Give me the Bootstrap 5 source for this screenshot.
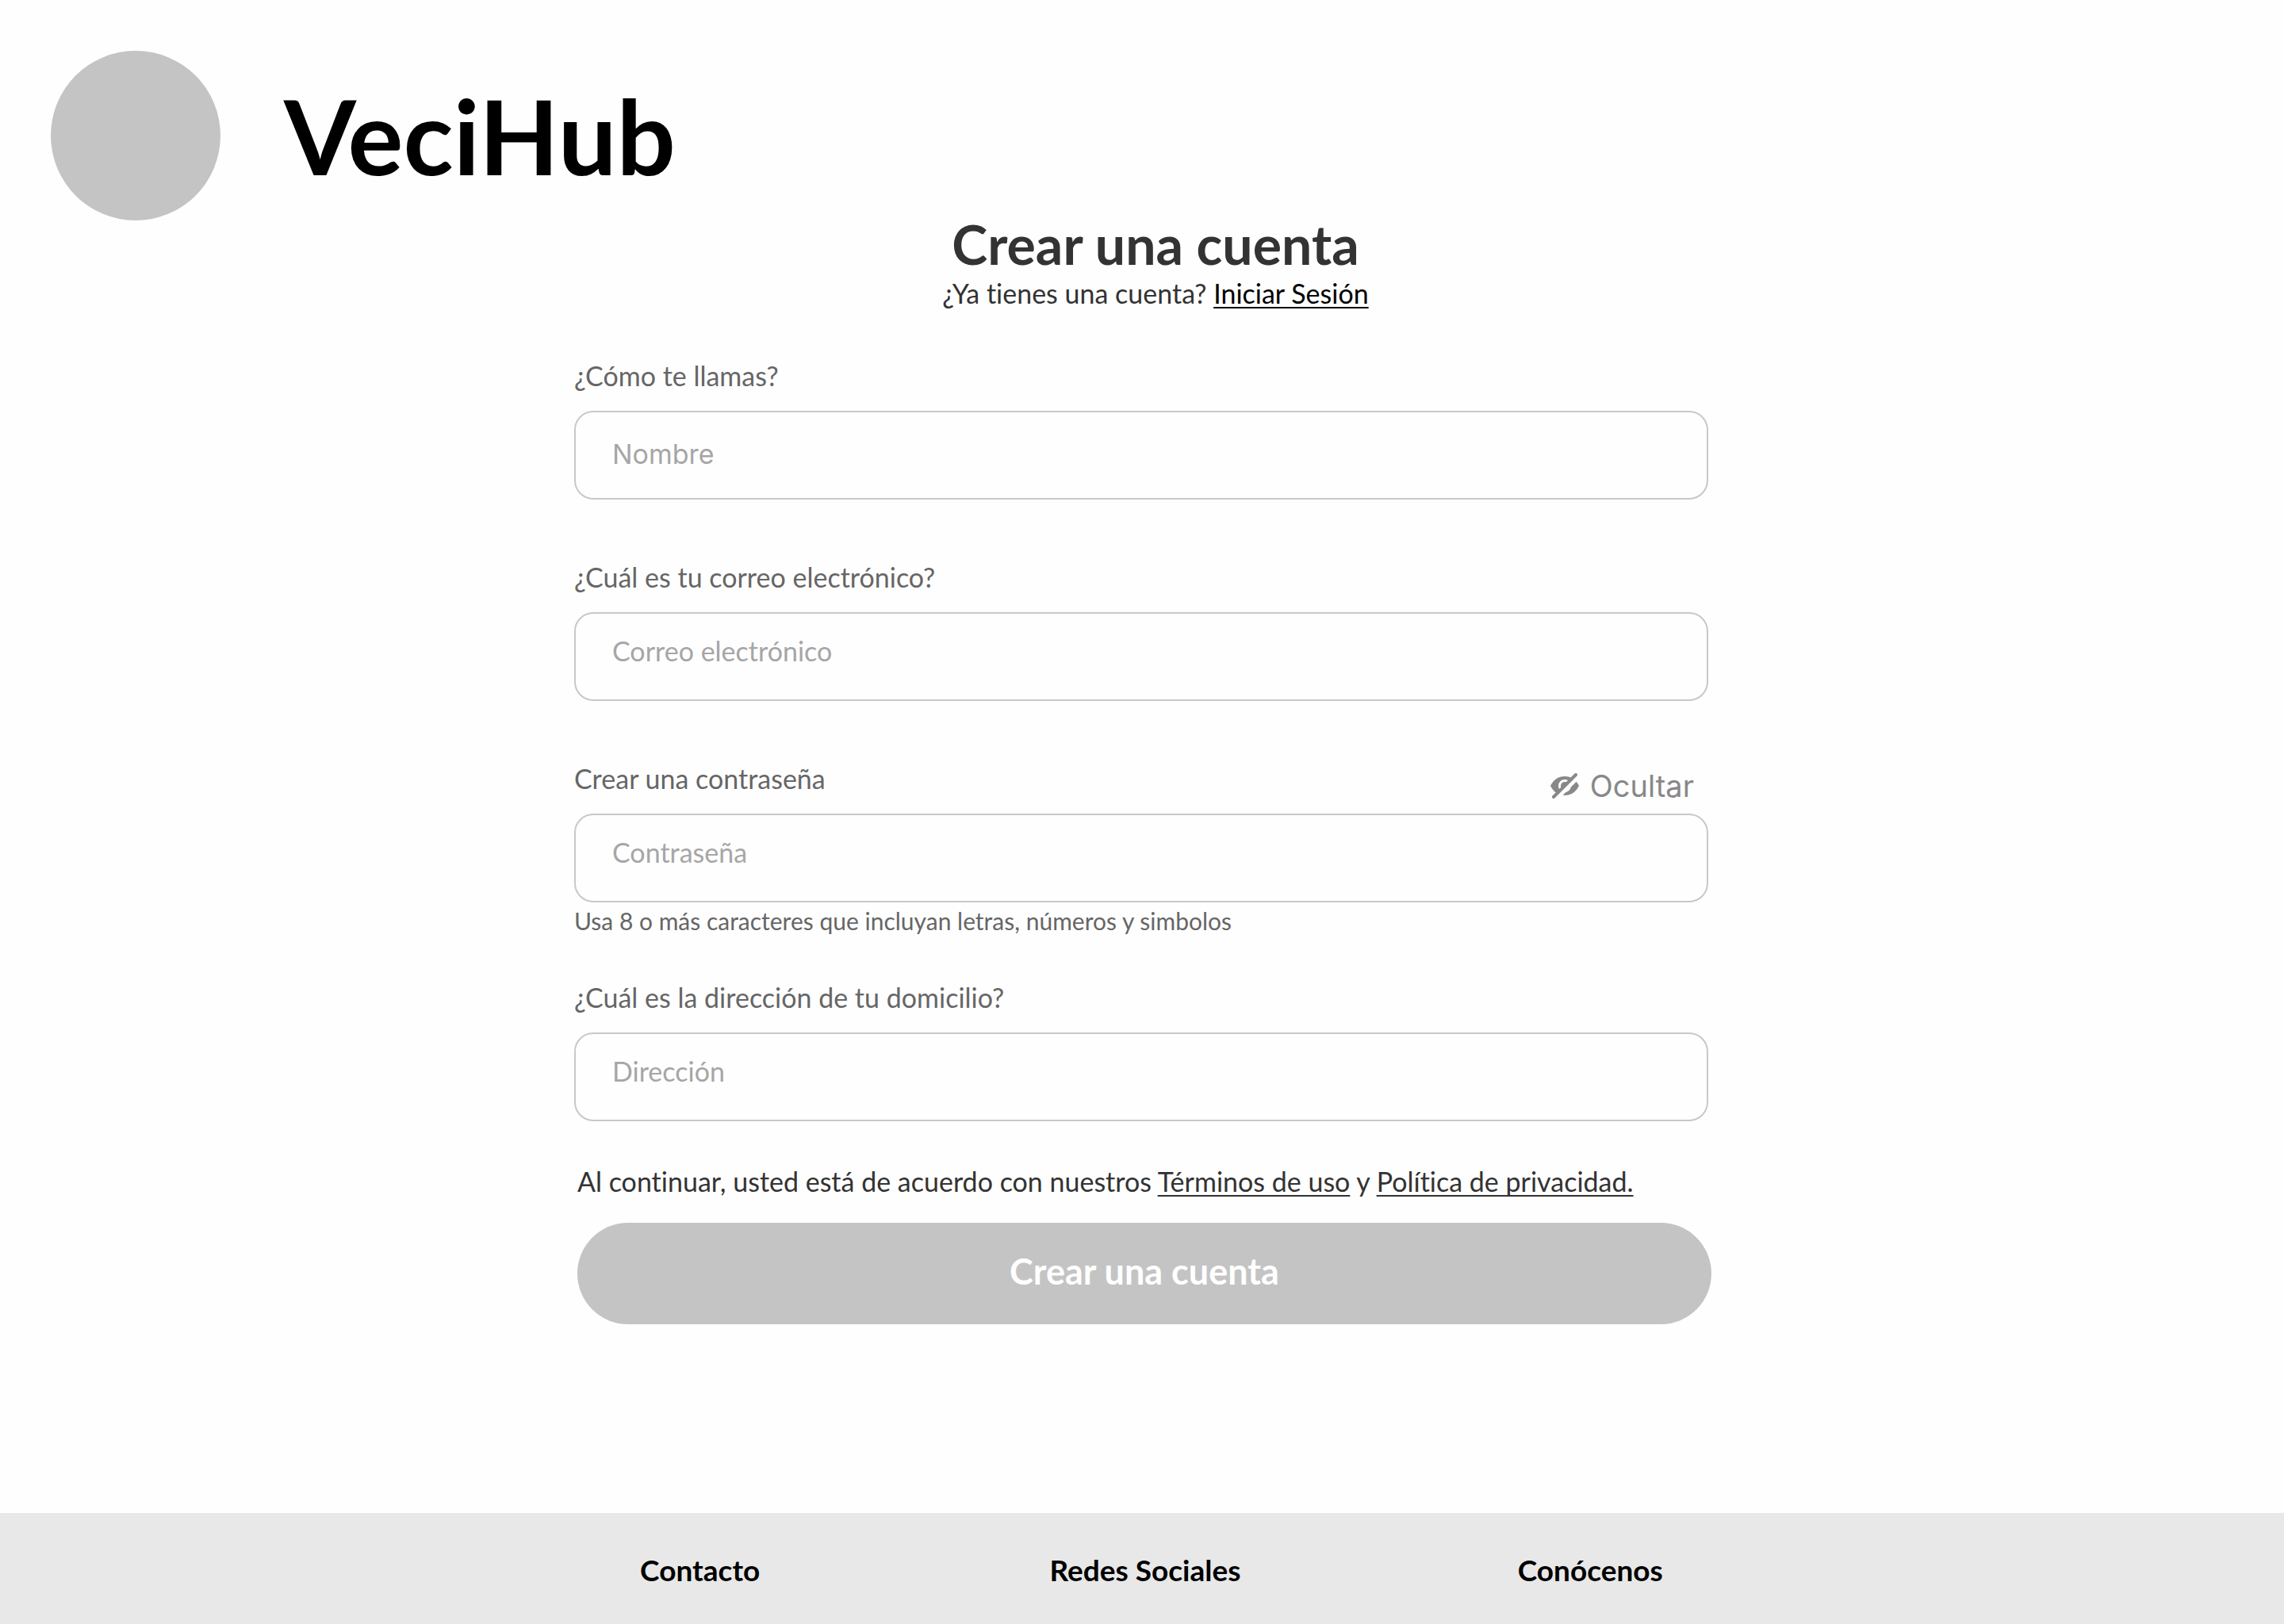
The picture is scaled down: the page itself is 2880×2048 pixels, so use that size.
<!DOCTYPE html>
<html lang="es">
<head>
<meta charset="utf-8">
<meta name="viewport" content="width=device-width, initial-scale=1">
<title>VeciHub - Crear una cuenta</title>
<link href="https://cdn.jsdelivr.net/npm/bootstrap@5.3.0/dist/css/bootstrap.min.css" rel="stylesheet">
<style>
  body { font-family: Lato, "Open Sans", sans-serif; font-size: 34px; line-height: 48px; font-variant-ligatures: none; color: #333; background: #fefefe; }
  .site-header { padding: 64px 64px 0; gap: 80px; }
  .logo-dot { width: 214px; height: 214px; background: #c4c4c4; }
  .site-name { font-size: 131px; line-height: 160px; font-weight: 700; color: #000; }
  .signup { width: 100%; max-width: 1432px; padding-right: 2px; }
  .signup-head { padding-left: 36px; margin-bottom: 56px; }
  .signup-title { font-size: 68px; line-height: 60px; font-weight: 700; color: #333; }
  .signup a { color: inherit; text-decoration-thickness: 2px; text-underline-offset: 4px; text-decoration-skip-ink: none; }
  .signup .login-link { color: #000; }
  .field { margin-bottom: 74px; }
  .field-hinted { margin-bottom: 54px; }
  .field-last { margin-bottom: 52px; }
  .field-label { color: #666; padding-bottom: 20px; }
  .field-input { height: 112px; padding: 0 46px 16px; border: 2px solid #c8c8c8; border-radius: 24px; font-size: 34px; background: #fefefe; }
  .field-input::placeholder { color: #a6a6a6; }
  .input-centered { padding-bottom: 4px; font-family: Inter, sans-serif; }
  .hint { font-size: 30px; line-height: 38px; color: #666; }
  .toggle-pass { font-family: Inter, sans-serif; font-size: 38px; line-height: 40px; color: #888; gap: 14px; margin: 0 18px 15px 0; }
  .toggle-pass svg { width: 36px; height: 32px; }
  .terms { margin-bottom: 28px; }
  .signup-end { margin: 0 -4px 0 4px; }
  .submit-btn, .submit-btn:hover { height: 128px; padding-bottom: 10px; font-size: 45px; font-weight: 700; color: #fff; background: #c4c4c4; }
  .site-footer { background: #e8e8e8; }
  .footer-links { max-width: 1692px; padding: 48px 0 44px 8px; font-size: 37px; font-weight: 700; }
  .footer-links a { color: #000; }
</style>
<script src="https://cdn.jsdelivr.net/npm/bootstrap@5.3.0/dist/js/bootstrap.bundle.min.js"></script>
</head>
<body class="d-flex flex-column min-vh-100">
<header class="site-header d-flex align-items-center">
  <div class="logo-dot rounded-circle"></div>
  <div class="site-name">VeciHub</div>
</header>

<main class="signup mx-auto">
  <div class="signup-head text-center">
    <h1 class="signup-title mb-2">Crear una cuenta</h1>
    <p class="mb-0">¿Ya tienes una cuenta? <a class="login-link" href="#login">Iniciar Sesión</a></p>
  </div>
  <form>
    <div class="field">
      <label class="field-label d-block" for="nombre">¿Cómo te llamas?</label>
      <input class="form-control field-input input-centered" id="nombre" type="text" placeholder="Nombre">
    </div>
    <div class="field">
      <label class="field-label d-block" for="correo">¿Cuál es tu correo electrónico?</label>
      <input class="form-control field-input" id="correo" type="email" placeholder="Correo electrónico">
    </div>
    <div class="field field-hinted">
      <div class="d-flex justify-content-between align-items-end">
        <label class="field-label" for="clave">Crear una contraseña</label>
        <button class="toggle-pass btn p-0 border-0 d-flex align-items-center" type="button">
          <svg viewBox="0 0 36 32" aria-hidden="true">
            <path fill="#888" d="M0 16C4 8 10 4 18 4s14 4 18 12c-4 8-10 12-18 12S4 24 0 16z"/>
            <circle cx="18" cy="16" r="6.500" fill="none" stroke="#fefefe" stroke-width="3"/>
            <path stroke="#fefefe" stroke-width="5" d="M5 35L37 3"/>
            <path stroke="#888" stroke-width="4" stroke-linecap="round" d="M4 30L32 2"/>
          </svg>
          <span>Ocultar</span>
        </button>
      </div>
      <input class="form-control field-input" id="clave" type="password" placeholder="Contraseña" aria-describedby="clave-hint">
      <div class="hint mt-1" id="clave-hint">Usa 8 o más caracteres que incluyan letras, números y simbolos</div>
    </div>
    <div class="field field-last">
      <label class="field-label d-block" for="direccion">¿Cuál es la dirección de tu domicilio?</label>
      <input class="form-control field-input" id="direccion" type="text" placeholder="Dirección">
    </div>
    <div class="signup-end">
      <p class="terms">Al continuar, usted está de acuerdo con nuestros <a href="#terminos">Términos de uso</a> y <a href="#privacidad">Política de privacidad.</a></p>
      <button class="submit-btn btn w-100 rounded-pill border-0" type="submit">Crear una cuenta</button>
    </div>
  </form>
</main>

<footer class="site-footer mt-auto">
  <nav class="footer-links row g-0 mx-auto text-center" aria-label="Pie de página">
    <div class="col-4"><a class="text-decoration-none" href="#contacto">Contacto</a></div>
    <div class="col-4"><a class="text-decoration-none" href="#redes">Redes Sociales</a></div>
    <div class="col-4"><a class="text-decoration-none" href="#conocenos">Conócenos</a></div>
  </nav>
</footer>
</body>
</html>
